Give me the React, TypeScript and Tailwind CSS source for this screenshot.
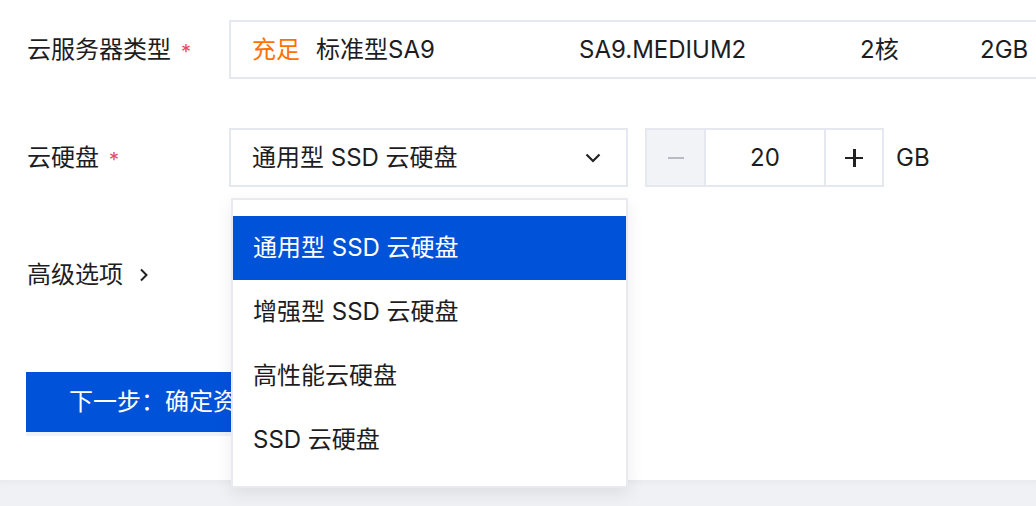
const font = { fontFamily: 'Inter, "Noto Sans CJK SC", sans-serif' };

function Required() {
  return <span className="ml-[10px] text-[20px] leading-none text-[#e34d59] translate-y-[2px]">*</span>;
}

function ChevronDown() {
  return (
    <svg width="16" height="10" viewBox="0 0 16 10" fill="none">
      <path d="M1.5 1.5L8 8L14.5 1.5" stroke="#222" strokeWidth="2.2" />
    </svg>
  );
}

function ChevronRight() {
  return (
    <svg width="10" height="14" viewBox="0 0 10 14" fill="none">
      <path d="M2 1.5L7.5 7L2 12.5" stroke="#222" strokeWidth="2" />
    </svg>
  );
}

const diskOptions = ["通用型 SSD 云硬盘", "增强型 SSD 云硬盘", "高性能云硬盘", "SSD 云硬盘"];

export default function App() {
  return (
    <div className="w-[1036px] h-[506px] overflow-hidden bg-white text-[24px] text-[#1d1d1f]" style={font}>
      <div className="relative h-[480px] pt-[20px] pl-[27px]">
        {/* 云服务器类型 */}
        <div className="flex items-center h-[59px]">
          <div className="w-[202px] shrink-0 flex items-center whitespace-nowrap">
            <span>云服务器类型</span>
            <Required />
          </div>
          <div className="flex items-center h-[59px] w-[900px] shrink-0 border-2 border-[#e5e8ef] pl-[21px] whitespace-nowrap">
            <span className="w-[64px] shrink-0 text-[#ff7200]">充足</span>
            <span className="w-[263px] shrink-0">标准型SA9</span>
            <span className="w-[281px] shrink-0">SA9.MEDIUM2</span>
            <span className="w-[120px] shrink-0">2核</span>
            <span>2GB</span>
          </div>
        </div>

        {/* 云硬盘 */}
        <div className="flex items-center h-[59px] mt-[49px]">
          <div className="w-[202px] shrink-0 flex items-center">
            <span>云硬盘</span>
            <Required />
          </div>
          <div className="flex items-center justify-between h-[59px] w-[399px] border-2 border-[#e5e8ef] pl-[21px] pr-[25px]">
            <span>通用型 SSD 云硬盘</span>
            <ChevronDown />
          </div>
          <div className="flex h-[59px] ml-[17px] border-2 border-[#e5e8ef]">
            <div className="w-[59px] flex items-center justify-center bg-[#f2f3f7] border-r-2 border-[#e5e8ef]">
              <div className="w-[16px] h-[2px] bg-[#b8bbc2]" />
            </div>
            <div className="w-[118px] flex items-center justify-center">20</div>
            <div className="w-[58px] flex items-center justify-center border-l-2 border-[#e5e8ef]">
              <div className="relative w-[18px] h-[18px]">
                <div className="absolute left-0 top-[8px] w-[18px] h-[2.5px] bg-[#222]" />
                <div className="absolute top-0 left-[8px] w-[2.5px] h-[18px] bg-[#222]" />
              </div>
            </div>
          </div>
          <span className="ml-[12px]">GB</span>
        </div>

        {/* 高级选项 */}
        <div className="flex items-center h-[32px] mt-[72px] gap-[16px]">
          <span>高级选项</span>
          <ChevronRight />
        </div>

        {/* 下一步 */}
        <button className="mt-[81px] -ml-px h-[60px] px-[43px] bg-[#0052d9] text-white shadow-[0_4px_0_#eef3fb] whitespace-nowrap">
          下一步：确定资源
        </button>

        {/* Dropdown */}
        <div className="absolute left-[231px] top-[198px] w-[397px] h-[290px] bg-white border-2 border-[#e8eaf0] py-[16px] shadow-[0_6px_16px_rgba(0,0,0,0.08)]">
          {diskOptions.map((opt, i) => (
            <div
              key={opt}
              className={
                i === 0
                  ? "h-[64px] flex items-center pl-[20px] bg-[#0052d9] text-white"
                  : "h-[64px] flex items-center pl-[20px]"
              }
            >
              {opt}
            </div>
          ))}
        </div>
      </div>
      <div className="h-[26px] bg-[#f0f1f5] shadow-[inset_0_6px_8px_-6px_rgba(0,0,0,0.06)]" />
    </div>
  );
}
